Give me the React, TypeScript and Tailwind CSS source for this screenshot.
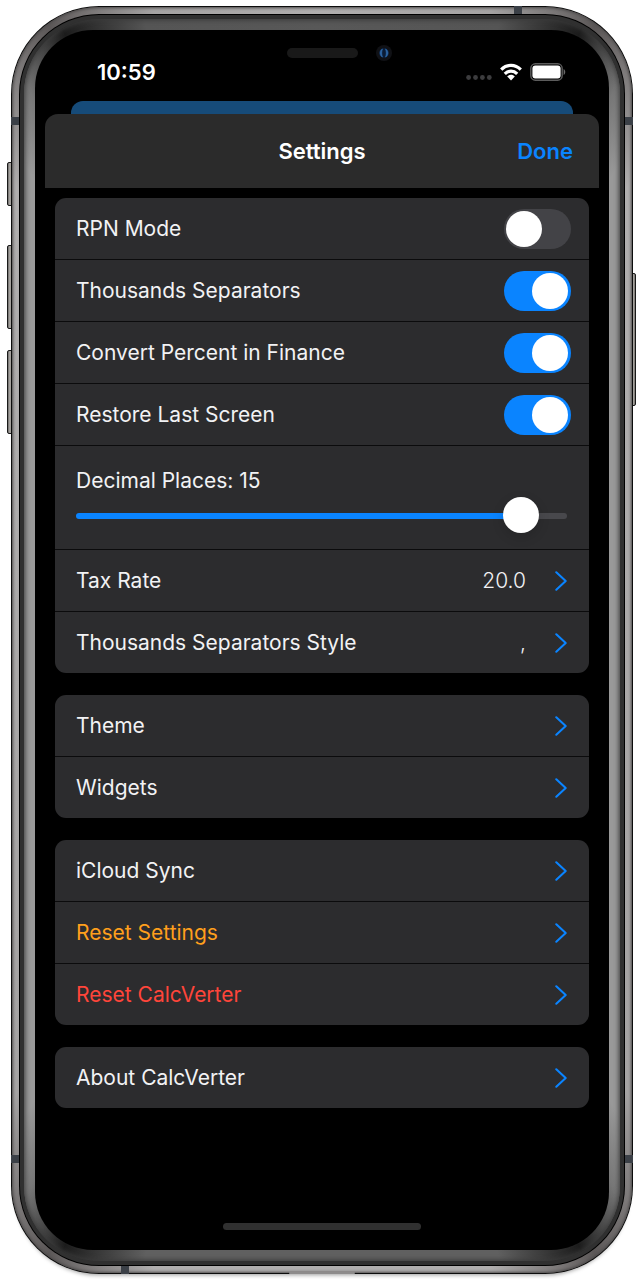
import { useState } from "react";
import type { CSSProperties, ReactNode } from "react";

type Tone = "text-[#f2f2f4]" | "text-[#ff9f1c]" | "text-[#ff453a]";

function Chevron() {
  return (
    <svg viewBox="0 0 12 20" className="h-5 w-3 shrink-0" fill="none" aria-hidden="true">
      <path d="M1.3 1.3 L10.7 10 L1.3 18.7" stroke="#0a84ff" strokeWidth="2.1" strokeLinecap="round" strokeLinejoin="round" />
    </svg>
  );
}

function ToggleRow({ label, initial }: { label: string; initial: boolean }) {
  const [on, setOn] = useState(initial);
  return (
    <label className="flex h-[62px] items-center justify-between pr-[18px] pl-[21px]">
      <span>{label}</span>
      <input
        type="checkbox"
        checked={on}
        onChange={(e) => setOn(e.target.checked)}
        className="flex h-10 w-[67px] shrink-0 appearance-none items-center rounded-full bg-[#434347] pr-[3px] pl-[2px] before:block before:size-9 before:rounded-full before:bg-white before:content-[''] checked:justify-end checked:bg-[#0a84ff]"
      />
    </label>
  );
}

function LinkRow({ label, value, tone = "text-[#f2f2f4]" }: { label: string; value?: string; tone?: Tone }) {
  return (
    <button type="button" className="flex h-[62px] w-full items-center pr-[22px] pl-[21px] text-left last:h-[61px]">
      <span className={`flex-1 ${tone}`}>{label}</span>
      {value && <span className="mr-[29px] font-light">{value}</span>}
      <Chevron />
    </button>
  );
}

function SliderRow() {
  const [places, setPlaces] = useState(15);
  const max = 16;
  const fill = { "--fill": `${(places / max) * 100}%` } as CSSProperties;
  return (
    <div className="flex h-[104px] flex-col gap-[2px] pt-5 pr-[22px] pl-[21px]">
      <label htmlFor="places" className="leading-[30px]">
        Decimal Places: {places}
      </label>
      <input
        id="places"
        type="range"
        min={0}
        max={max}
        value={places}
        onChange={(e) => setPlaces(Number(e.target.value))}
        style={fill}
        className="h-9 w-full appearance-none bg-transparent [&::-webkit-slider-runnable-track]:h-[6px] [&::-webkit-slider-runnable-track]:rounded-full [&::-webkit-slider-runnable-track]:bg-[linear-gradient(to_right,#0a84ff_var(--fill),#48484c_var(--fill))] [&::-webkit-slider-thumb]:-mt-[16px] [&::-webkit-slider-thumb]:size-9 [&::-webkit-slider-thumb]:appearance-none [&::-webkit-slider-thumb]:rounded-full [&::-webkit-slider-thumb]:bg-white [&::-webkit-slider-thumb]:shadow-[0_4px_12px_rgba(0,0,0,0.15)]"
      />
    </div>
  );
}

function Card({ children }: { children: ReactNode }) {
  return (
    <section className="divide-y divide-[#0b0b0c] overflow-hidden rounded-[11px] bg-[#2c2c2e] text-[21px]">
      {children}
    </section>
  );
}

function StatusIcons() {
  return (
    <div className="flex items-center gap-2">
      <svg viewBox="0 0 26 18" className="h-[18px] w-[26px]" fill="#3c3c3e" aria-hidden="true">
        <circle cx="2.6" cy="14.5" r="2.4" />
        <circle cx="9.5" cy="14.5" r="2.4" />
        <circle cx="16.4" cy="14.5" r="2.4" />
        <circle cx="23.3" cy="14.5" r="2.4" />
      </svg>
      <svg viewBox="0 0 22 18" className="h-[18px] w-[22px]" fill="none" stroke="#fff" strokeWidth="3.2" aria-hidden="true">
        <path d="M1.2 6.6 C6.8 1 15.2 1 20.8 6.6" />
        <path d="M4.8 10.8 C8.4 7.2 13.6 7.2 17.2 10.8" />
        <path d="M7.2 13.4 C9.2 11.3 12.8 11.3 14.8 13.4 L11 17.4 Z" fill="#fff" stroke="none" />
      </svg>
      <svg viewBox="0 0 36 18" className="h-[18px] w-9" aria-hidden="true">
        <rect x="0.8" y="0.8" width="31.4" height="16.4" rx="4.6" fill="none" stroke="#5c5c5c" strokeWidth="1.4" />
        <rect x="2.4" y="2.4" width="28.2" height="13.2" rx="3" fill="#fff" />
        <path d="M33.6 6 C35.8 7 35.8 11 33.6 12 Z" fill="#6a6a6a" />
      </svg>
    </div>
  );
}

function Camera() {
  return (
    <svg viewBox="0 0 16 16" className="size-4" aria-hidden="true">
      <circle cx="8" cy="8" r="8" fill="#101115" />
      <circle cx="8" cy="8" r="5" fill="#0b1c36" />
      <path d="M6.4 4 C3.4 5.4 3.4 10.6 6.4 12 C5.4 9.4 5.4 6.6 6.4 4 Z" fill="#3672b4" stroke="#2a629f" strokeWidth="0.8" />
      <path d="M9.6 4 C12.6 5.4 12.6 10.6 9.6 12 C10.6 9.4 10.6 6.6 9.6 4 Z" fill="#3672b4" stroke="#2a629f" strokeWidth="0.8" />
    </svg>
  );
}

function SideButton({ place }: { place: string }) {
  return (
    <span
      className={`absolute w-[6px] rounded-[2px] border border-[#1a1a1a] bg-linear-to-r from-[#6d6b69] via-[#b5b2ae] to-[#77746f] ${place}`}
    />
  );
}

function Antenna({ place }: { place: string }) {
  return <span className={`absolute size-2 bg-[#3b4047] ${place}`} />;
}

export default function App() {
  return (
    <div className="flex min-h-screen flex-col bg-white px-[11px] py-[6px] font-['Inter','Liberation_Sans',sans-serif] text-[22px] text-[#f2f2f4]">
      <div className="relative flex grow flex-col">
        <SideButton place="-left-1 top-[156px] h-[44px]" />
        <SideButton place="-left-1 top-[239px] h-[84px]" />
        <SideButton place="-left-1 top-[344px] h-[84px]" />
        <SideButton place="-right-[3px] top-[267px] h-[133px]" />
        <div className="relative flex grow flex-col rounded-[88px] bg-[#0c0c0c] p-px shadow-[0_5px_4px_-4px_rgba(0,0,0,0.4)]">
          <div className="flex grow flex-col rounded-[87px] bg-[conic-gradient(#b0aeae_0deg,#a5a3a3_15deg,#5c5858_24deg,#b0aeae_34deg,#a5a3a3_146deg,#5c5858_156deg,#b0aeae_165deg,#b0aeae_195deg,#5c5858_204deg,#a5a3a3_214deg,#b0aeae_326deg,#5c5858_336deg,#a5a3a3_345deg,#b0aeae_360deg)] p-[7px] shadow-[inset_0_0_3px_1px_#4b4949]">
            <div className="flex grow flex-col rounded-[80px] bg-black p-px">
              <div className="flex grow flex-col rounded-[79px] bg-[#303030] p-1">
                <div className="flex grow flex-col rounded-[75px] bg-[conic-gradient(#585858_0deg,#555555_16deg,#1c1c1c_23deg,#777777_28deg,#999999_32deg,#999999_148deg,#777777_152deg,#1c1c1c_157deg,#606060_164deg,#606060_196deg,#1c1c1c_203deg,#777777_208deg,#999999_212deg,#999999_328deg,#777777_332deg,#1c1c1c_337deg,#555555_344deg,#585858_360deg)] p-[11px] shadow-[inset_0_0_5px_1px_#3a3a3a]">
                  <main className="flex grow flex-col rounded-[58px] bg-black px-[10px]">
                    <div className="flex items-center justify-center gap-[18px] pt-[15px]" aria-hidden="true">
                      <span className="size-4" />
                      <span className="h-[10px] w-[71px] rounded-full bg-[#191919]" />
                      <Camera />
                    </div>
                    <div className="flex h-[22px] items-center justify-between pr-[33px] pl-[52px] font-semibold text-white">
                      <span>10:59</span>
                      <StatusIcons />
                    </div>
                    <div className="mx-[26px] mt-[18px] h-[13px] rounded-t-[12px] bg-[#164b79]" />
                    <header className="grid h-[74px] grid-cols-3 items-center rounded-t-[13px] bg-[#2b2b2b] px-[26px] font-semibold">
                      <h1 className="col-start-2 text-center text-white">Settings</h1>
                      <button type="button" className="justify-self-end text-[#0a84ff]">
                        Done
                      </button>
                    </header>
                    <div className="flex flex-col gap-[22px] px-[10px] pt-[10px]">
                      <Card>
                        <ToggleRow label="RPN Mode" initial={false} />
                        <ToggleRow label="Thousands Separators" initial />
                        <ToggleRow label="Convert Percent in Finance" initial />
                        <ToggleRow label="Restore Last Screen" initial />
                        <SliderRow />
                        <LinkRow label="Tax Rate" value="20.0" />
                        <LinkRow label="Thousands Separators Style" value="," />
                      </Card>
                      <Card>
                        <LinkRow label="Theme" />
                        <LinkRow label="Widgets" />
                      </Card>
                      <Card>
                        <LinkRow label="iCloud Sync" />
                        <LinkRow label="Reset Settings" tone="text-[#ff9f1c]" />
                        <LinkRow label="Reset CalcVerter" tone="text-[#ff453a]" />
                      </Card>
                      <Card>
                        <LinkRow label="About CalcVerter" />
                      </Card>
                    </div>
                    <div className="mx-auto mt-auto mb-[20px] h-[7px] w-[198px] rounded-full bg-[#303030]" />
                  </main>
                </div>
              </div>
            </div>
          </div>
          <Antenna place="left-0 top-[111px]" />
          <Antenna place="right-0 top-[111px]" />
          <Antenna place="left-0 bottom-[111px]" />
          <Antenna place="right-0 bottom-[111px]" />
          <Antenna place="right-[111px] top-0" />
          <Antenna place="left-[110px] bottom-0" />
          <span className="absolute inset-x-0 bottom-0 mx-auto h-[2px] w-[66px] rounded-full bg-[#8d8b8b]" />
        </div>
      </div>
    </div>
  );
}
